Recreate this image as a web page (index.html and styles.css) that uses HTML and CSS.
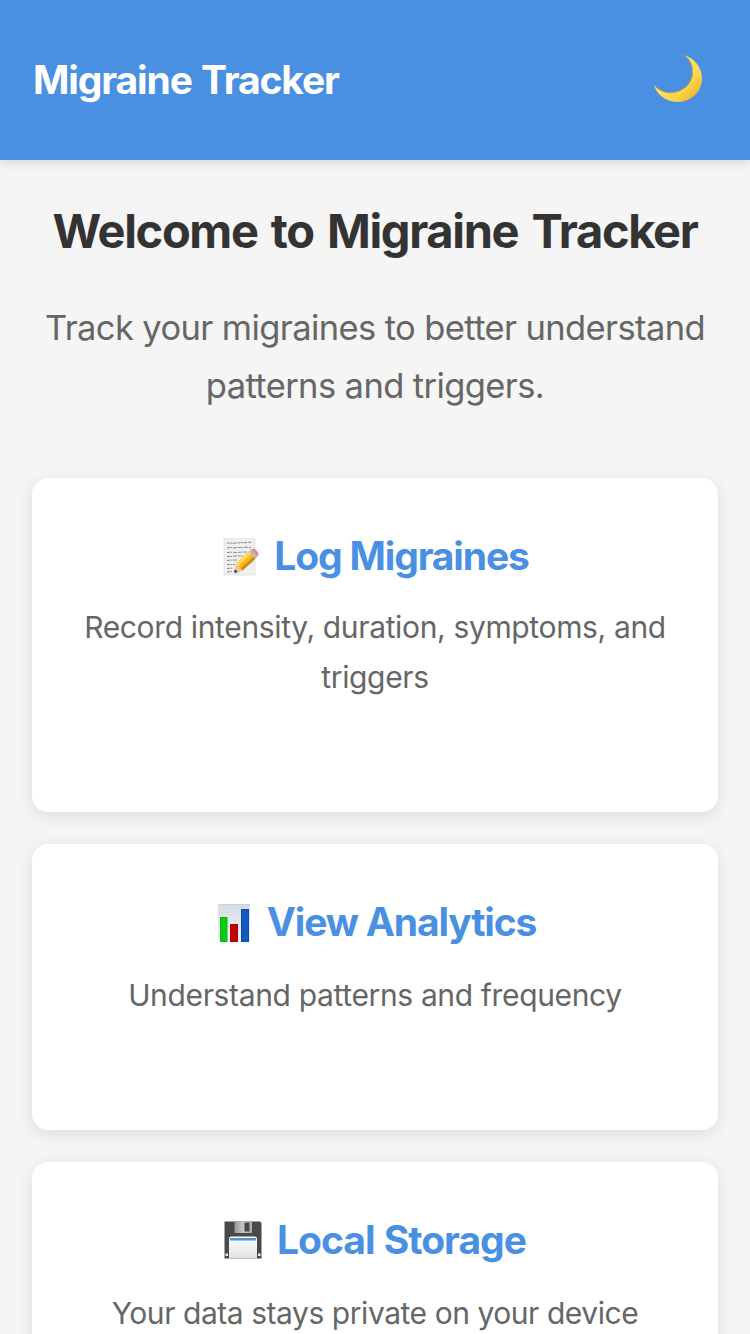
FILE: index.html
```html
<!DOCTYPE html>
<html lang="en">
<head>
<meta charset="utf-8">
<meta name="viewport" content="width=device-width, initial-scale=1">
<title>Migraine Tracker</title>
<link rel="stylesheet" href="styles.css">
</head>
<body>
<header class="header">
  <h1 class="brand">Migraine Tracker</h1>
  <button class="theme-toggle" aria-label="Toggle theme">
    <svg class="moon" viewBox="0 0 48 48">
      <defs>
        <linearGradient id="moon" x1=".2" y1=".3" x2=".85" y2=".95"><stop offset="0" stop-color="#ffe477"/><stop offset=".65" stop-color="#fbd64c"/><stop offset="1" stop-color="#e9b02a"/></linearGradient>
      </defs>
      <path d="M30 0C40 3 48 12 48 23.500C48 37 37 47 24 47C12 47 3 40 0 30C6 37 14 39 22 37C33 34 39 26 38.500 16C38.200 9 35.500 4 30 0Z" fill="url(#moon)"/>
      <path d="M1 31C7 37 14 39 22 37C33 34 39 26 38.500 16C38.200 9 35.500 4 31 .8" fill="none" stroke="#bd9a3e" stroke-width=".8"/>
    </svg>
  </button>
</header>
<main class="main">
  <h2 class="welcome">Welcome to Migraine Tracker</h2>
  <p class="intro">Track your migraines to better understand patterns and triggers.</p>
  <section class="cards">
    <article class="card card-tall">
      <h3 class="card-title log">
        <svg class="icon memo" viewBox="0 0 36 38">
          <path d="M1 .5H32V37H1Z" fill="#efefef" stroke="#dedede" stroke-width=".7"/>
          <g fill="none" stroke="#888" stroke-width="1" stroke-dasharray="3 .7 1.500 .8 4 1"><path d="M4 5.500l2-1 2 1 3-.5 3 .3 3-.8 4 .4 4-.7 4 .2"/><path d="M4 10l4-.5 3 .5 3-.5 4 .2 5-.5 5 .2"/><path d="M4 14.500l5-.3 5 .3 6-.5 4 0"/><path d="M4 18.500h4l4-.5h8"/><path d="M4 22.500l5-.5h6"/><path d="M4 26.500h8"/><path d="M4 30.500l6-.5"/><path d="M4 34l5-.5"/></g>
          <path d="M12 35L30 22" stroke="#bbb" stroke-width="4" opacity=".55"/>
          <path d="M11 34.800L13 25.500L19.500 32.500Z" fill="#ecc799"/>
          <path d="M11 34.800L11.900 31.300L14.600 34Z" fill="#333"/>
          <path d="M13 25.500L26 13.500L32.500 20.500L19.500 32.500Z" fill="#f5ba20"/>
          <path d="M13 25.500L26 13.500L28.200 15.800L15.200 28Z" fill="#ffda52"/>
          <path d="M17.600 30.500L30.600 18.500L32.500 20.500L19.500 32.500Z" fill="#d28a17"/>
          <path d="M26 13.500L28 11.600L34.400 18.600L32.500 20.500Z" fill="#b7bbc0"/>
          <path d="M28 11.600Q30.700 9.500 33.800 12.800T34.400 18.600Z" fill="#ee8588"/>
        </svg><span class="label">Log Migraines</span>
      </h3>
      <p class="card-text record">Record intensity, duration, symptoms, and triggers</p>
    </article>
    <article class="card">
      <h3 class="card-title analytics">
        <svg class="icon chart" viewBox="0 0 32 38">
          <defs><linearGradient id="paper" x2="0" y2="1"><stop stop-color="#d5dde3"/><stop offset=".5" stop-color="#e5ebf3"/><stop offset="1" stop-color="#f2f5fb"/></linearGradient></defs>
          <path d="M0 0H32V38H0Z" fill="url(#paper)"/>
          <path d="M8 0V38M16 0V38M24 0V38M0 8H32M0 16H32M0 24H32M0 32H32" stroke="#cfd8e0" stroke-width=".4"/>
          <path d="M0 .4H32" stroke="#c8cdd2" stroke-width=".8"/>
          <path d="M2 13H9.500V38H2Z" fill="#08b80c"/><path d="M3 14H8.500V37H3Z" fill="#10ca15"/>
          <path d="M12 20H20V38H12Z" fill="#a90000"/><path d="M13 21H19V37H13Z" fill="#c00505"/>
          <path d="M23 5H31V38H23Z" fill="#0b4dae"/><path d="M24 6H30V37H24Z" fill="#125abd"/>
        </svg><span class="label">View Analytics</span>
      </h3>
      <p class="card-text">Understand patterns and frequency</p>
    </article>
    <article class="card">
      <h3 class="card-title storage">
        <svg class="icon floppy" viewBox="0 0 38 38">
          <defs><linearGradient id="label" x2="0" y2="1"><stop stop-color="#fff"/><stop offset="1" stop-color="#e1e1e1"/></linearGradient><linearGradient id="shutter"><stop stop-color="#999"/><stop offset=".5" stop-color="#c8c8c8"/><stop offset="1" stop-color="#aaa"/></linearGradient></defs>
          <path d="M.5 .5H36L37.500 2V37.500H.5Z" fill="#494949"/>
          <path d="M10.500 .5H28V12H10.500Z" fill="url(#shutter)"/>
          <path d="M20.500 1.500H25.500V10.500H20.500Z" fill="#484848"/>
          <path d="M5 37.500V18Q5 15.500 7.500 15.500H30.500Q33 15.500 33 18V37.500Z" fill="url(#label)"/>
          <path d="M6 17H32V19.500H6Z" fill="#4c94d4"/>
          <path d="M1.500 32.500H4V35H1.500ZM34 32.500H36.500V35H34Z" fill="#ececec"/>
        </svg><span class="label">Local Storage</span>
      </h3>
      <p class="card-text private">Your data stays private on your device</p>
    </article>
  </section>
</main>
</body>
</html>
```
FILE: styles.css
```css
* { box-sizing: border-box; margin: 0; padding: 0; }
html { height: 100%; overflow: hidden; }
body {
  height: 1334px;
  overflow: hidden;
  background: #f5f5f5;
  color: #333;
  font-family: Inter, "Liberation Sans", sans-serif;
}
.header {
  position: relative;
  display: flex;
  align-items: center;
  justify-content: space-between;
  height: 160px;
  padding: 0 48px 0 32px;
  background: #4a90e2;
  color: #fff;
  box-shadow: 0 4px 8px rgba(0, 0, 0, .1);
}
.brand { padding-left: 1px; font-size: 39px; font-weight: 650; line-height: 64px; letter-spacing: -1.100px; word-spacing: 1px; white-space: nowrap; }
.theme-toggle { display: flex; border: 0; background: none; }
.moon { display: block; width: 48px; height: 48px; margin-top: -3px; }
.main { height: 1174px; padding: 32px 32px 0; overflow: hidden; }
.welcome { font-size: 47px; font-weight: 700; line-height: 77px; text-align: center; letter-spacing: -1.350px; word-spacing: 3.500px; white-space: nowrap; }
.intro { margin: 30px -16px 0; padding: 0 16px; color: #666; font-size: 34.500px; line-height: 58px; text-align: center; letter-spacing: -.6px; }
.cards { display: grid; gap: 32px; margin-top: 63px; }
.card {
  height: 286px;
  padding: 48px 40px;
  border-radius: 16px;
  background: #fff;
  box-shadow: 0 4px 16px rgba(0, 0, 0, .1);
}
.card-tall { height: 334px; }
.card-title {
  display: flex;
  align-items: center;
  justify-content: center;
  height: 60px;
  color: #4a90e2;
  font-size: 39px;
  font-weight: 700;
  letter-spacing: -1.150px;
  white-space: nowrap;
}
.log { padding-left: 2px; }
.analytics { padding-left: 4px; }
.storage { letter-spacing: -1px; word-spacing: 1px; }
.label { padding-bottom: 2px; }
.icon { display: block; flex: none; height: 38px; margin-top: 2px; }
.memo { width: 36px; margin-right: 15px; }
.chart { width: 32px; margin-right: 17px; }
.floppy { width: 38px; margin-top: 0; margin-right: 15px; }
.card-text { margin-top: 18px; color: #666; font-size: 30px; line-height: 50px; text-align: center; letter-spacing: -.350px; }
.record { margin-top: 16px; }
.private { letter-spacing: -.450px; }
```
